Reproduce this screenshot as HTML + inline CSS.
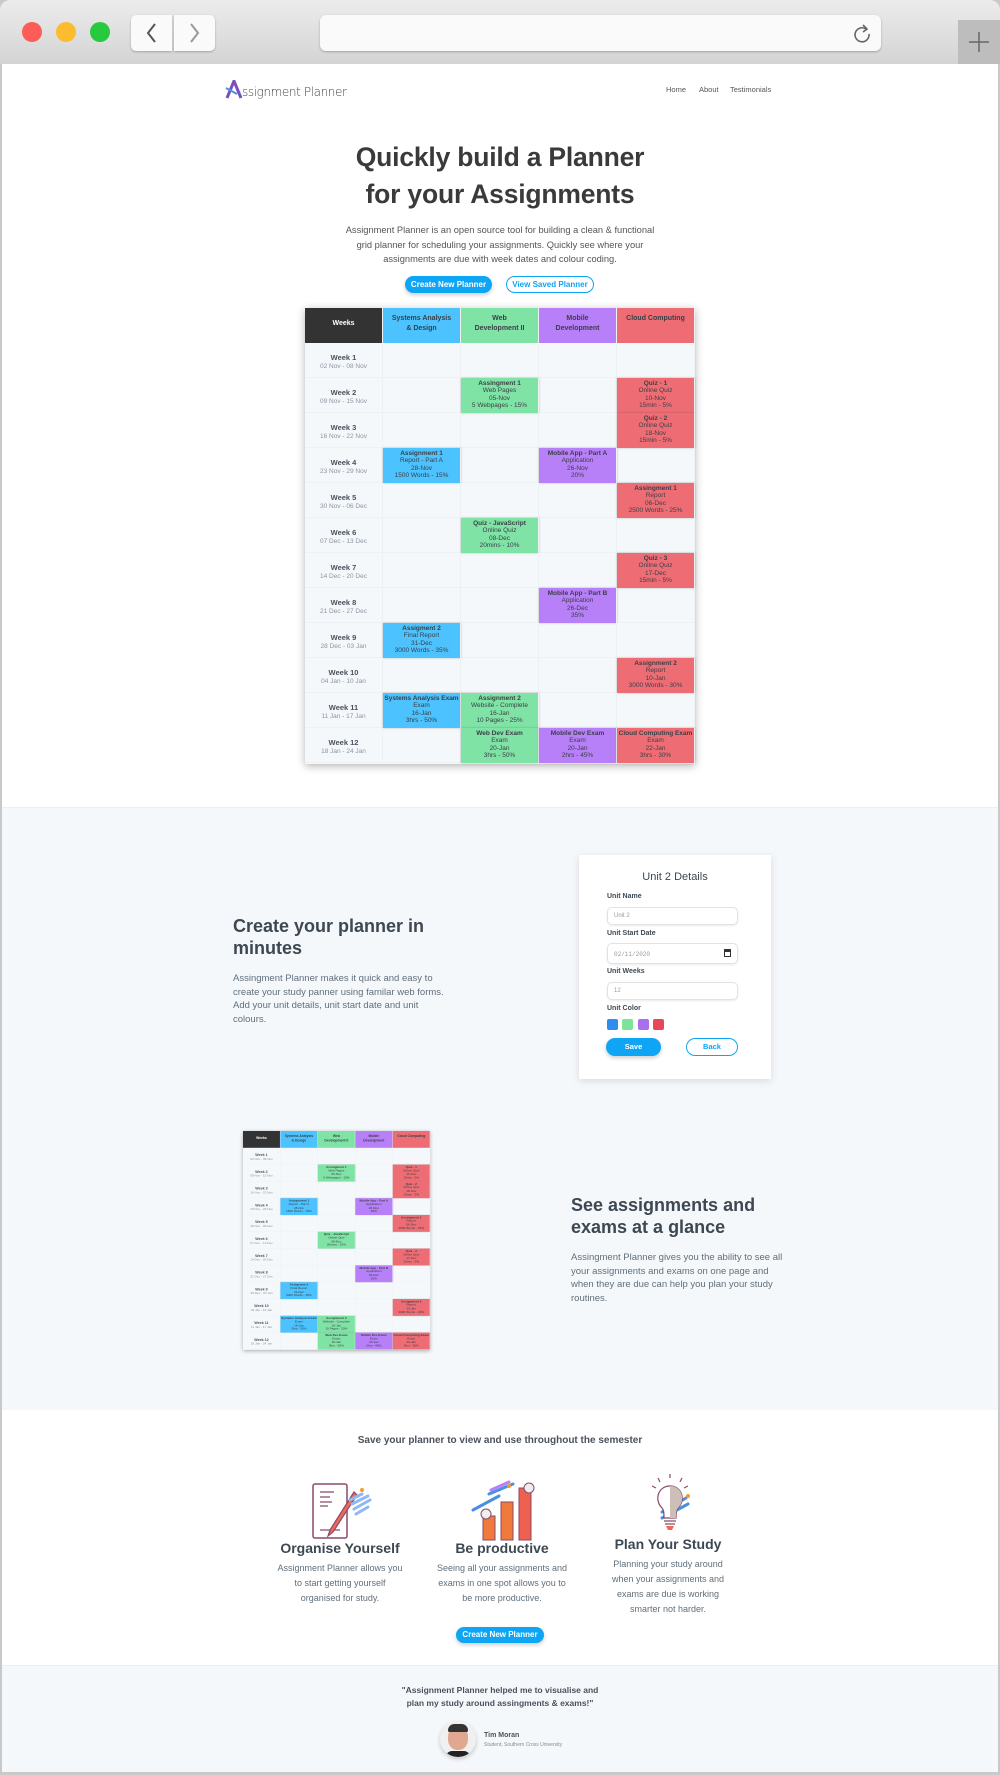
<!DOCTYPE html>
<html><head><meta charset="utf-8">
<style>
*{box-sizing:border-box;margin:0;padding:0}
body{width:1000px;height:1775px;overflow:hidden;background:#c9c9c9;font-family:"Liberation Sans",sans-serif;color:#3d4852;position:relative}
.abs{position:absolute}
#chrome{left:0;top:0;width:1000px;height:64px;background:linear-gradient(#ececec,#d4d4d4);border-radius:10px 10px 0 0}
.dot{position:absolute;top:22px;width:20px;height:20px;border-radius:50%}
#page{left:2px;top:64px;width:996px;height:1708px;background:#fff}
.c{text-align:center}
.btn{position:absolute;border-radius:10px;font-size:8px;font-weight:bold;text-align:center;line-height:17px}
.blue{background:#0ea5f5;color:#fff;box-shadow:0 2px 4px rgba(0,0,0,.2)}
.tbl{position:absolute;width:390px;height:456px;box-shadow:0 2px 8px rgba(0,0,0,.3);background:#f5f8fb;font-size:6.5px;line-height:7.5px;text-align:center;color:#3d4852}
.row{display:flex;height:35px;border-bottom:1px solid #eef1f4}
.row>div{width:78px;height:35px;border-right:1px solid #eef1f4;padding-top:1.5px;overflow:hidden;white-space:nowrap}
.hd>div{color:#fff;font-weight:bold;font-size:7px;line-height:10px;padding-top:6px}
.w{padding-top:9px!important;color:#8a94a0}
.w b{color:#4a525c;font-size:7.5px;line-height:11px}
.B{background:#4cc3ff}.G{background:#80e3a6}.P{background:#b77ff8}.R{background:#ee6d75}
.B,.G,.P,.R{box-shadow:0 0 2px rgba(0,0,0,.25)}
.row>div.B,.row>div.G,.row>div.P,.row>div.R{color:#3a3f45}
.h2{font-size:18px;font-weight:bold;color:#3d4852;line-height:22px}
.p{font-size:9.5px;line-height:13.5px;color:#606f7b}
.lbl{position:absolute;left:607px;font-size:7px;font-weight:bold;color:#3d4852}
.inp{position:absolute;left:607px;width:131px;height:18px;border:1px solid #dfe3e8;border-radius:5px;font-size:6px;color:#999;padding:5px 6px;box-shadow:0 1px 2px rgba(0,0,0,.08);background:#fff}
.ft{position:absolute;text-align:center;width:170px}
.ft h3{font-size:14px;color:#3d4852;margin-bottom:5px}
.ft p{font-size:9px;line-height:15px;color:#606f7b}
</style></head><body>
<div id="chrome" class="abs">
<div class="dot" style="left:22px;background:#fd5d57"></div>
<div class="dot" style="left:56px;background:#fdbc2e"></div>
<div class="dot" style="left:90px;background:#27c93f"></div>
<div class="abs" style="left:131px;top:15px;width:41px;height:36px;background:#fafafa;border-radius:5px 0 0 5px;box-shadow:0 1px 2px rgba(0,0,0,.25)"><svg width="41" height="36"><path d="M24 9 L17 18 L24 27" stroke="#555" stroke-width="2" fill="none"/></svg></div>
<div class="abs" style="left:174px;top:15px;width:41px;height:36px;background:#fafafa;border-radius:0 5px 5px 0;box-shadow:0 1px 2px rgba(0,0,0,.25)"><svg width="41" height="36"><path d="M17 9 L24 18 L17 27" stroke="#999" stroke-width="2" fill="none"/></svg></div>
<div class="abs" style="left:320px;top:15px;width:561px;height:36px;background:#fafafa;border-radius:6px;box-shadow:0 1px 2px rgba(0,0,0,.25)"><svg class="abs" style="left:531px;top:8px" width="22" height="22"><path d="M15 6 A7 7 0 1 0 18 11" stroke="#666" stroke-width="1.6" fill="none"/><path d="M12 2 L16 6 L12 9" stroke="#666" stroke-width="1.6" fill="none"/></svg></div>
<div class="abs" style="left:958px;top:20px;width:42px;height:44px;background:#bdbdbd"><svg width="42" height="44"><path d="M21 12 V32 M11 22 H31" stroke="#666" stroke-width="1.5"/></svg></div>
</div>
<div id="page" class="abs">
<svg class="abs" style="left:223px;top:16px" width="18" height="20"><path d="M2 18 L9 1 L16 18" stroke="#7c4dbd" stroke-width="3" fill="none"/><path d="M1 8 L12 14" stroke="#4a90e2" stroke-width="2"/></svg>
<div class="abs" style="left:240px;top:21px;font-size:12px;color:#444;font-family:'DejaVu Sans',sans-serif;letter-spacing:-.4px;font-weight:300">ssignment Planner</div>
<div class="abs" style="left:664px;top:21px;font-size:7.5px;color:#555">Home</div>
<div class="abs" style="left:697px;top:21px;font-size:7.5px;color:#555">About</div>
<div class="abs" style="left:728px;top:21px;font-size:7.5px;color:#555">Testimonials</div>
<div class="abs c" style="left:0;width:996px;top:75px;font-size:26.5px;font-weight:bold;line-height:37px;color:#3a3a3a;letter-spacing:-.2px">Quickly build a Planner<br>for your Assignments</div>
<div class="abs c p" style="left:0;width:996px;top:159px;color:#555;font-size:9.3px;line-height:14.7px">Assignment Planner is an open source tool for building a clean &amp; functional<br>grid planner for scheduling your assignments. Quickly see where your<br>assignments are due with week dates and colour coding.</div>
<div class="btn blue" style="left:403px;top:212px;width:87px;height:17px">Create New Planner</div>
<div class="btn" style="left:504px;top:212px;width:88px;height:17px;border:1px solid #0ea5f5;color:#0ea5f5;line-height:15px">View Saved Planner</div>

<div class="tbl" style="left:303px;top:244px">
<div class="row hd"><div style="background:#333;padding-top:11px">Weeks</div><div class="B" style="box-shadow:none">Systems Analysis<br>&amp; Design</div><div class="G" style="box-shadow:none">Web<br>Development II</div><div class="P" style="box-shadow:none">Mobile<br>Development</div><div class="R" style="box-shadow:none">Cloud Computing</div></div>
<div class="row"><div class="w"><b>Week 1</b><br>02 Nov - 08 Nov</div><div></div><div></div><div></div><div></div></div>
<div class="row"><div class="w"><b>Week 2</b><br>09 Nov - 15 Nov</div><div></div><div class="G"><b>Assingment 1</b><br>Web Pages<br>05-Nov<br>5 Webpages - 15%</div><div></div><div class="R"><b>Quiz - 1</b><br>Online Quiz<br>10-Nov<br>15min - 5%</div></div>
<div class="row"><div class="w"><b>Week 3</b><br>16 Nov - 22 Nov</div><div></div><div></div><div></div><div class="R"><b>Quiz - 2</b><br>Online Quiz<br>18-Nov<br>15min - 5%</div></div>
<div class="row"><div class="w"><b>Week 4</b><br>23 Nov - 29 Nov</div><div class="B"><b>Assignment 1</b><br>Report - Part A<br>28-Nov<br>1500 Words - 15%</div><div></div><div class="P"><b>Mobile App - Part A</b><br>Application<br>26-Nov<br>20%</div><div></div></div>
<div class="row"><div class="w"><b>Week 5</b><br>30 Nov - 06 Dec</div><div></div><div></div><div></div><div class="R"><b>Assingment 1</b><br>Report<br>06-Dec<br>2500 Words - 25%</div></div>
<div class="row"><div class="w"><b>Week 6</b><br>07 Dec - 13 Dec</div><div></div><div class="G"><b>Quiz - JavaScript</b><br>Online Quiz<br>08-Dec<br>20mins - 10%</div><div></div><div></div></div>
<div class="row"><div class="w"><b>Week 7</b><br>14 Dec - 20 Dec</div><div></div><div></div><div></div><div class="R"><b>Quiz - 3</b><br>Online Quiz<br>17-Dec<br>15min - 5%</div></div>
<div class="row"><div class="w"><b>Week 8</b><br>21 Dec - 27 Dec</div><div></div><div></div><div class="P"><b>Mobile App - Part B</b><br>Application<br>26-Dec<br>35%</div><div></div></div>
<div class="row"><div class="w"><b>Week 9</b><br>28 Dec - 03 Jan</div><div class="B"><b>Assigment 2</b><br>Final Report<br>31-Dec<br>3000 Words - 35%</div><div></div><div></div><div></div></div>
<div class="row"><div class="w"><b>Week 10</b><br>04 Jan - 10 Jan</div><div></div><div></div><div></div><div class="R"><b>Assignment 2</b><br>Report<br>10-Jan<br>3000 Words - 30%</div></div>
<div class="row"><div class="w"><b>Week 11</b><br>11 Jan - 17 Jan</div><div class="B"><b>Systems Analysis Exam</b><br>Exam<br>16-Jan<br>3hrs - 50%</div><div class="G"><b>Assignment 2</b><br>Website - Complete<br>16-Jan<br>10 Pages - 25%</div><div></div><div></div></div>
<div class="row"><div class="w"><b>Week 12</b><br>18 Jan - 24 Jan</div><div></div><div class="G"><b>Web Dev Exam</b><br>Exam<br>20-Jan<br>3hrs - 50%</div><div class="P"><b>Mobile Dev Exam</b><br>Exam<br>20-Jan<br>2hrs - 45%</div><div class="R"><b>Cloud Computing Exam</b><br>Exam<br>22-Jan<br>3hrs - 30%</div></div>
</div>

<div class="abs" style="left:0;top:743px;width:996px;height:603px;background:#f5f8fb;border-top:1px solid #eceff2"></div>
<div class="abs h2" style="left:231px;top:851px">Create your planner in<br>minutes</div>
<div class="abs p" style="left:231px;top:908px">Assingment Planner makes it quick and easy to<br>create your study panner using familar web forms.<br>Add your unit details, unit start date and unit<br>colours.</div>
<div class="abs" style="left:577px;top:791px;width:192px;height:224px;background:#fff;box-shadow:0 2px 8px rgba(0,0,0,.12)"></div>
<div class="abs c" style="left:577px;top:807px;width:192px;font-size:11px;color:#3d4852">Unit 2 Details</div>
<div class="lbl" style="top:829px;left:605px">Unit Name</div>
<div class="inp" style="top:843px;left:605px">Unit 2</div>
<div class="lbl" style="top:866px;left:605px">Unit Start Date</div>
<div class="inp" style="top:879px;left:605px;height:21px;font-family:'Liberation Mono',monospace;padding-top:7px">02/11/2020<span style="position:absolute;right:6px;top:5px;width:7px;height:8px;border:1.5px solid #333;border-top-width:3px"></span></div>
<div class="lbl" style="top:904px;left:605px">Unit Weeks</div>
<div class="inp" style="top:918px;left:605px">12</div>
<div class="lbl" style="top:941px;left:605px">Unit Color</div>
<div class="abs" style="left:605px;top:955px;width:11px;height:11px;border-radius:2px;background:#2d8ef0"></div>
<div class="abs" style="left:620px;top:955px;width:11px;height:11px;border-radius:2px;background:#7de39b"></div>
<div class="abs" style="left:636px;top:955px;width:11px;height:11px;border-radius:2px;background:#a970ee"></div>
<div class="abs" style="left:651px;top:955px;width:11px;height:11px;border-radius:2px;background:#e8475a"></div>
<div class="btn blue" style="left:604px;top:974px;width:55px;height:18px;line-height:18px;font-size:7.5px">Save</div>
<div class="btn" style="left:684px;top:974px;width:52px;height:18px;border:1px solid #0ea5f5;color:#0ea5f5;line-height:16px;font-size:7.5px">Back</div>

<div class="tbl" style="left:241px;top:1067px;transform:scale(.48);transform-origin:0 0" id="t2"></div>
<div class="abs h2" style="left:569px;top:1130px">See assignments and<br>exams at a glance</div>
<div class="abs p" style="left:569px;top:1187px">Assingment Planner gives you the ability to see all<br>your assignments and exams on one page and<br>when they are due can help you plan your study<br>routines.</div>

<div class="abs c" style="left:0;width:996px;top:1371px;font-size:10px;font-weight:bold;color:#4a525c">Save your planner to view and use throughout the semester</div>
<svg class="abs" style="left:308px;top:1418px" width="66" height="60"><rect x="3" y="2" width="34" height="54" rx="2" fill="#fff" stroke="#8a4a6a" stroke-width="1.5"/><path d="M10 10H24M10 15H20M10 20H22M10 24H18M10 48H30" stroke="#8a4a6a" stroke-width="1.2"/><path d="M44 10 L20 48 L18 54 L23 50 L47 13Z" fill="#ef6a55" stroke="#8a4a6a" stroke-width="1.2"/><path d="M40 18L52 12M42 22L58 14M44 27L60 18M46 32L58 25" stroke="#8fb8f5" stroke-width="3" stroke-linecap="round"/><circle cx="52" cy="8" r="2" fill="#f79a2d"/></svg>
<svg class="abs" style="left:467px;top:1414px" width="72" height="64"><path d="M4 32L30 18M20 16L44 6" stroke="#4a90e2" stroke-width="3" stroke-linecap="round"/><path d="M22 12L40 4" stroke="#b77ff8" stroke-width="3" stroke-linecap="round"/><rect x="14" y="38" width="12" height="24" fill="#ef7a3c" stroke="#8a4a6a"/><rect x="32" y="24" width="12" height="38" fill="#ef7a3c" stroke="#8a4a6a"/><rect x="50" y="10" width="12" height="52" fill="#ee6050" stroke="#8a4a6a"/><circle cx="17" cy="36" r="5" fill="#eee" stroke="#8a4a6a"/><circle cx="60" cy="10" r="5" fill="#eee" stroke="#8a4a6a"/><circle cx="40" cy="8" r="2" fill="#f79a2d"/></svg>
<svg class="abs" style="left:640px;top:1408px" width="60" height="66"><path d="M28 2V6M16 6L18 10M40 6L38 10M10 14L14 16M46 14L42 16" stroke="#8a4a6a" stroke-width="1.2"/><path d="M20 40L44 26M20 46L46 32" stroke="#4a90e2" stroke-width="3" stroke-linecap="round"/><path d="M28 14 C16 14 12 28 20 36 C22 38 22 42 22 46 H34 C34 42 34 38 36 36 C44 28 40 14 28 14Z" fill="#fff" stroke="#8a4a6a" stroke-width="1.2"/><path d="M28 14 C40 14 44 28 36 36 C34 38 34 42 34 46 H28Z" fill="#cbbfb8"/><path d="M22 49H34M23 52H33" stroke="#8a4a6a" stroke-width="1.2"/><path d="M24 54H32L30 58H26Z" fill="#ef6a55"/><circle cx="46" cy="24" r="2" fill="#f79a2d"/></svg>
<div class="ft" style="left:253px;top:1476px"><h3>Organise Yourself</h3><p>Assignment Planner allows you<br>to start getting yourself<br>organised for study.</p></div>
<div class="ft" style="left:415px;top:1476px"><h3>Be productive</h3><p>Seeing all your assignments and<br>exams in one spot allows you to<br>be more productive.</p></div>
<div class="ft" style="left:581px;top:1472px"><h3>Plan Your Study</h3><p>Planning your study around<br>when your assignments and<br>exams are due is working<br>smarter not harder.</p></div>
<div class="btn blue" style="left:454px;top:1563px;width:88px;height:16px;line-height:16px">Create New Planner</div>

<div class="abs" style="left:0;top:1601px;width:996px;height:107px;background:#f5f8fb;border-top:1px solid #eceff2"></div>
<div class="abs c" style="left:0;width:996px;top:1620px;font-size:8.5px;font-weight:bold;line-height:13px;color:#4a525c">"Assignment Planner helped me to visualise and<br>plan my study around assingments &amp; exams!"</div>
<div class="abs" style="left:438px;top:1657px;width:36px;height:36px;border-radius:50%;background:#f0f0f0;box-shadow:0 2px 5px rgba(0,0,0,.2);overflow:hidden"><div class="abs" style="left:8px;top:5px;width:20px;height:24px;border-radius:45%;background:#e0a890"></div><div class="abs" style="left:8px;top:3px;width:20px;height:8px;border-radius:8px 8px 2px 2px;background:#333"></div><div class="abs" style="left:6px;top:30px;width:24px;height:10px;background:#222;border-radius:6px 6px 0 0"></div></div>
<div class="abs" style="left:482px;top:1668px;font-size:7px;font-weight:bold;color:#4a525c">Tim Moran</div>
<div class="abs" style="left:482px;top:1678px;font-size:5px;color:#888">Student, Southern Cross University</div>
</div>
<script>
var t=document.querySelector('.tbl').innerHTML;document.getElementById('t2').innerHTML=t;
</script>
</body></html>
